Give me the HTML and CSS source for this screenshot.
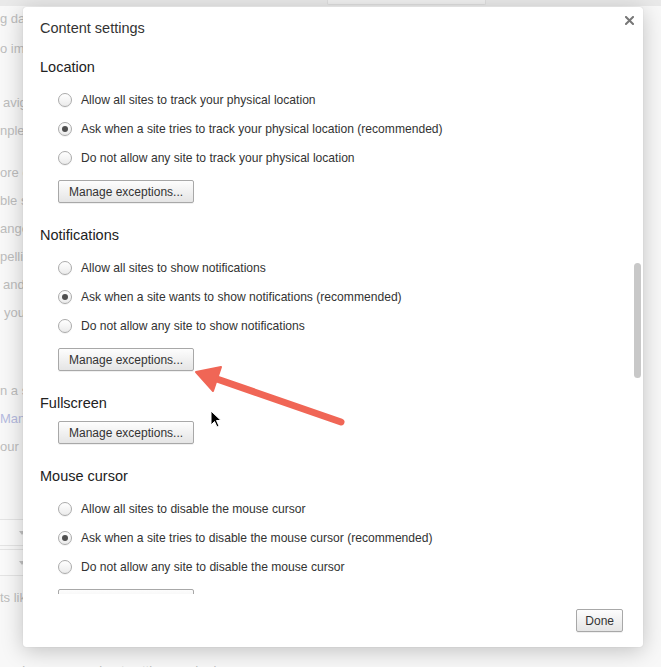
FILE: index.html
```html
<!DOCTYPE html>
<html lang="en">
<head>
    <meta charset="UTF-8">
    <meta name="viewport" content="width=device-width, initial-scale=1.0">
    <title>Content settings</title>
    <link rel="stylesheet" href="styles.css">
</head>
<body>
    <!-- settings page behind the overlay -->
    <div class="page">
        <div class="topbar"><div class="search"></div></div>
        <div class="page-lines">
            <div class="ln mt-3">g data</div>
            <div class="ln mt-10">o images</div>
            <div class="ln mt-34 in-3">avigation</div>
            <div class="ln">npletions</div>
            <div class="ln mt-22">ore content</div>
            <div class="ln">ble sync</div>
            <div class="ln">anges</div>
            <div class="ln">pelling</div>
            <div class="ln in-3">and</div>
            <div class="ln in-4">your</div>
            <div class="ln mt-58">n a site</div>
            <div class="ln link">Manage</div>
            <div class="ln">our Keys</div>
            <div class="select mt-62"><span class="caret"></span></div>
            <div class="select mt-3"><span class="caret"></span></div>
            <div class="ln mt-12">ts like</div>
            <div class="ln mt-53 in-22">Learn more about settings and privacy</div>
        </div>
    </div>

    <div class="dialog">
        <div class="dialog-header">
            <h1>Content settings</h1>
            <button class="close" aria-label="Close">
                <svg width="9" height="9" viewBox="0 0 9 9"><path d="M1 1L8 8M8 1L1 8" stroke="#777" stroke-width="2" stroke-linecap="square"/></svg>
            </button>
        </div>

        <div class="dialog-body">
            <section class="group">
                <h2>Location</h2>
                <div class="options">
                    <label class="option"><span class="radio"></span>Allow all sites to track your physical location</label>
                    <label class="option"><span class="radio checked"></span>Ask when a site tries to track your physical location (recommended)</label>
                    <label class="option"><span class="radio"></span>Do not allow any site to track your physical location</label>
                </div>
                <button class="btn">Manage exceptions...</button>
            </section>

            <section class="group">
                <h2>Notifications</h2>
                <div class="options">
                    <label class="option"><span class="radio"></span>Allow all sites to show notifications</label>
                    <label class="option"><span class="radio checked"></span>Ask when a site wants to show notifications (recommended)</label>
                    <label class="option"><span class="radio"></span>Do not allow any site to show notifications</label>
                </div>
                <button class="btn">Manage exceptions...</button>
            </section>

            <section class="group">
                <h2>Fullscreen</h2>
                <button class="btn">Manage exceptions...</button>
            </section>

            <section class="group">
                <h2>Mouse cursor</h2>
                <div class="options">
                    <label class="option"><span class="radio"></span>Allow all sites to disable the mouse cursor</label>
                    <label class="option"><span class="radio checked"></span>Ask when a site tries to disable the mouse cursor (recommended)</label>
                    <label class="option"><span class="radio"></span>Do not allow any site to disable the mouse cursor</label>
                </div>
                <button class="btn">Manage exceptions...</button>
            </section>

            <div class="scroll-thumb"></div>
        </div>

        <div class="dialog-footer">
            <button class="btn">Done</button>
        </div>
    </div>

    <!-- annotation arrow and mouse pointer -->
    <svg class="annotation" width="661" height="667" viewBox="0 0 661 667">
        <line x1="214" y1="378" x2="341" y2="422" stroke="#f06656" stroke-width="7" stroke-linecap="round"/>
        <polygon points="196,372 221,367 213,391" fill="#f06656" stroke="#f06656" stroke-width="2" stroke-linejoin="round"/>
        <path d="M211 411 L211 425 L214.5 421.5 L217 427 L219 426 L216.5 420.5 L221 420.5 Z" fill="#000" stroke="#fff" stroke-width="1"/>
    </svg>
</body>
</html>
```

FILE: styles.css
```css
* {
    margin: 0;
    padding: 0;
    box-sizing: border-box;
}

html, body {
    height: 667px;
    overflow: hidden;
}

body {
    font-family: "Liberation Sans", Arial, sans-serif;
    background: #f8f8f8;
    color: #333;
}

/* page behind the dialog */
.page {
    height: 667px;
}

.topbar {
    height: 6px;
    background: #e9e9e9;
    position: relative;
}

.search {
    margin-left: 327px;
    width: 159px;
    height: 5px;
    border: 1px solid #dedede;
    border-top: none;
    border-radius: 0 0 2px 2px;
    background: #f0f0f0;
}

.page-lines {
    font-size: 13px;
    color: #bdbdbd;
    white-space: nowrap;
}

.ln {
    height: 20px;
    line-height: 20px;
    margin-top: 8px;
}

.ln.link {
    color: #b6bbe0;
}

.mt-3 { margin-top: 3px; }
.mt-10 { margin-top: 10px; }
.mt-12 { margin-top: 12px; }
.mt-22 { margin-top: 22px; }
.mt-34 { margin-top: 34px; }
.mt-53 { margin-top: 53px; }
.mt-58 { margin-top: 58px; }
.mt-62 { margin-top: 62px; }
.in-3 { padding-left: 3px; }
.in-4 { padding-left: 4px; }
.in-22 { padding-left: 22px; }

.select {
    height: 27px;
    width: 110px;
    margin-left: -80px;
    border: 1px solid #e4e4e4;
    background: #fafafa;
    display: flex;
    align-items: center;
    justify-content: flex-end;
    padding-right: 4px;
}

.caret {
    width: 0;
    height: 0;
    border-left: 3px solid transparent;
    border-right: 3px solid transparent;
    border-top: 4px solid #c4c4c4;
}

/* dialog */
.dialog {
    position: absolute;
    top: 7px;
    left: 23px;
    width: 620px;
    height: 640px;
    background: #fff;
    border-radius: 3px;
    box-shadow: 0 4px 22px rgba(0, 0, 0, 0.22), 0 0 1px rgba(0, 0, 0, 0.2);
    display: flex;
    flex-direction: column;
}

.dialog-header {
    height: 38px;
    padding: 9px 9px 0 17px;
    display: flex;
    justify-content: space-between;
    align-items: flex-start;
}

.dialog-header h1 {
    font-size: 14.5px;
    font-weight: normal;
    line-height: 20px;
    margin-top: 2px;
    color: #333;
}

.close {
    border: none;
    background: none;
    width: 9px;
    height: 9px;
    display: block;
}

.close svg {
    display: block;
}

.dialog-body {
    flex: 1;
    overflow: hidden;
    position: relative;
    padding: 12px 17px 0;
}

.group {
    margin-bottom: 22px;
}

.group h2 {
    font-size: 14.5px;
    font-weight: normal;
    line-height: 20px;
    margin-bottom: 8px;
    color: #222;
}

.group h2 + .btn {
    margin-top: 1px;
}

.options {
    padding-left: 18px;
    margin-bottom: 8px;
}

.option {
    height: 29px;
    display: flex;
    align-items: center;
    gap: 9px;
    font-size: 12.1px;
    color: #333;
}

.radio {
    width: 14px;
    height: 14px;
    border-radius: 50%;
    border: 1px solid #ababab;
    background: linear-gradient(#ffffff, #ebebeb);
    box-shadow: 0 1px 0 rgba(0, 0, 0, 0.05);
    display: flex;
    align-items: center;
    justify-content: center;
    flex-shrink: 0;
}

.radio.checked::after {
    content: "";
    width: 6px;
    height: 6px;
    border-radius: 50%;
    background: #4f4f4f;
}

.btn {
    display: block;
    height: 23px;
    padding: 0 10px;
    margin-left: 18px;
    font-family: "Liberation Sans", Arial, sans-serif;
    font-size: 12px;
    color: #333;
    border: 1px solid #a8a8a8;
    border-radius: 2px;
    background: linear-gradient(#fdfdfd, #e5e5e5);
    box-shadow: 0 1px 0 rgba(0, 0, 0, 0.06);
}

.scroll-thumb {
    position: absolute;
    top: 218px;
    right: 2px;
    width: 7px;
    height: 115px;
    border-radius: 4px;
    background: #c8c8c8;
}

.dialog-footer {
    height: 53px;
    padding-right: 20px;
    display: flex;
    justify-content: flex-end;
    align-items: center;
}

.dialog-footer .btn {
    margin-left: 0;
    padding: 0 8px;
}

.annotation {
    position: absolute;
    top: 0;
    left: 0;
    pointer-events: none;
}
```
